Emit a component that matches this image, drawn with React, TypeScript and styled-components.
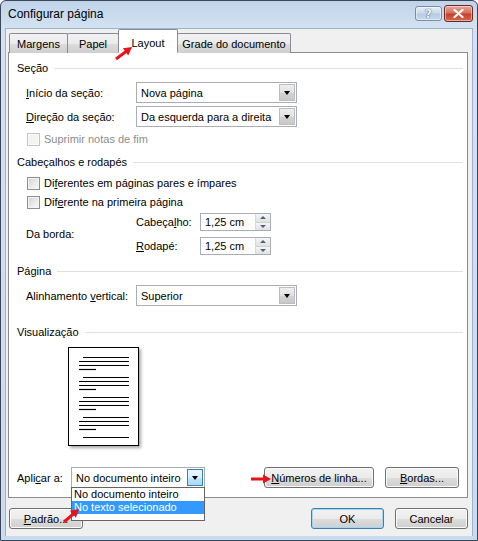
import styled, { createGlobalStyle } from "styled-components";

const GlobalStyle = createGlobalStyle`
  html, body {
    margin: 0;
    padding: 0;
    background: #ffffff;
  }
  body {
    font-family: "Liberation Sans", Arial, sans-serif;
    font-size: 11px;
    color: #000;
  }
`;

const Frame = styled.div`
  position: relative;
  width: 478px;
  height: 541px;
  box-sizing: border-box;
  border: 1px solid #3b4756;
  border-radius: 6px 6px 0 0;
  background: linear-gradient(to bottom, #bfd3ea 0, #d3e2f2 26px, #c9dbee 100%);
  padding: 0 5px 4px 5px;
  display: flex;
  flex-direction: column;
`;

const TitleBar = styled.div`
  height: 27px;
  display: flex;
  align-items: center;
  padding-left: 2px;
  margin-right: -1px;
  flex-shrink: 0;
`;

const Title = styled.div`
  flex: 1;
  font-size: 12px;
  color: #000;
  padding-bottom: 1px;
`;

const CaptionButton = styled.div<{ $close?: boolean }>`
  box-sizing: border-box;
  width: ${(p) => (p.$close ? 29 : 27)}px;
  height: ${(p) => (p.$close ? 17 : 15)}px;
  margin-top: ${(p) => (p.$close ? -3 : -2)}px;
  margin-left: ${(p) => (p.$close ? 2 : 0)}px;
  border-radius: 3px;
  border: 1px solid ${(p) => (p.$close ? "#6d2a22" : "#7a8ca5")};
  background: ${(p) =>
    p.$close
      ? "linear-gradient(to bottom, #e9a99b 0%, #d8705d 45%, #c2412a 55%, #d66a4d 100%)"
      : "linear-gradient(to bottom, #e6eef7 0%, #cbd9e9 45%, #b7cbe1 55%, #c9d9ec 100%)"};
  box-shadow: inset 0 0 0 1px rgba(255, 255, 255, 0.45);
  display: flex;
  align-items: center;
  justify-content: center;
  color: #ffffff;
  font-family: "DejaVu Sans", sans-serif;
  font-weight: bold;
  font-size: 12px;
  line-height: 1;
`;

const HelpGlyph = styled.span`
  color: #eef4fb;
  text-shadow: 0 0 1px #3d5676, 0 0 1px #3d5676;
  font-size: 12px;
`;

const Client = styled.div`
  flex: 1;
  background: #f0f0f0;
  border: 1px solid #9fb2c8;
  border-bottom: none;
  margin: 0 -1px;
  display: flex;
  flex-direction: column;
`;

const TabStrip = styled.div`
  display: flex;
  align-items: flex-end;
  height: 24px;
  padding-left: 3px;
  position: relative;
  z-index: 2;
`;

const Tab = styled.div<{ $width: number; $active?: boolean }>`
  box-sizing: border-box;
  width: ${(p) => p.$width}px;
  height: ${(p) => (p.$active ? 24 : 20)}px;
  margin-left: -1px;
  border: 1px solid #898c95;
  border-bottom: ${(p) => (p.$active ? "1px solid #ffffff" : "none")};
  border-radius: 2px 2px 0 0;
  background: ${(p) =>
    p.$active
      ? "#ffffff"
      : "linear-gradient(to bottom, #f2f2f2 0%, #ebebeb 50%, #dddddd 51%, #cfcfcf 100%)"};
  display: flex;
  align-items: center;
  justify-content: center;
  line-height: 16px;
  padding-top: ${(p) => (p.$active ? 3 : 0)}px;
  position: relative;
  white-space: nowrap;
  z-index: ${(p) => (p.$active ? 2 : 1)};
  &:first-child {
    margin-left: 0;
  }
`;

const Panel = styled.div`
  box-sizing: border-box;
  height: 446px;
  margin: -1px 4px 0 2px;
  background: #ffffff;
  border: 1px solid #898c95;
  padding: 7px 4px 0 8px;
  display: flex;
  flex-direction: column;
  position: relative;
`;

const SectionHeading = styled.div<{ $top: number }>`
  margin-top: ${(p) => p.$top}px;
  height: 16px;
  line-height: 16px;
  display: flex;
  align-items: center;
  gap: 6px;
  &::after {
    content: "";
    flex: 1;
    height: 1px;
    background: #dde1e6;
  }
`;

const FieldRow = styled.div<{ $top: number; $indent?: number }>`
  margin-top: ${(p) => p.$top}px;
  padding-left: ${(p) => p.$indent ?? 9}px;
  display: flex;
  align-items: center;
  height: 21px;
`;

const Label = styled.div<{ $width: number }>`
  width: ${(p) => p.$width}px;
  flex-shrink: 0;
  line-height: 16px;
  white-space: nowrap;
`;

const Key = styled.span`
  text-decoration: underline;
  text-underline-offset: 1px;
`;

const Select = styled.div<{ $width: number }>`
  box-sizing: border-box;
  position: relative;
  width: ${(p) => p.$width}px;
  height: 21px;
  border: 1px solid #a9adb5;
  background: #ffffff;
  display: flex;
  align-items: center;
  padding: 1px;
`;

const SelectText = styled.div`
  flex: 1;
  padding-left: 3px;
  line-height: 16px;
  white-space: nowrap;
  overflow: hidden;
`;

const DropButton = styled.div<{ $hot?: boolean }>`
  box-sizing: border-box;
  width: 16px;
  height: 17px;
  border: 1px solid ${(p) => (p.$hot ? "#3c7fb1" : "#bdbdbd")};
  background: ${(p) =>
    p.$hot
      ? "linear-gradient(to bottom, #eaf6fd 0%, #d9f0fc 50%, #bee6fd 51%, #a7d9f5 100%)"
      : "linear-gradient(to bottom, #efefef 0%, #e0e0e0 50%, #d3d3d3 51%, #c8c8c8 100%)"};
  display: flex;
  align-items: center;
  justify-content: center;
  &::before {
    content: "";
    border-left: 3px solid transparent;
    border-right: 3px solid transparent;
    border-top: 4px solid #000000;
    margin-top: 1px;
  }
`;

const DropList = styled.div`
  position: absolute;
  top: 100%;
  left: -1px;
  right: -1px;
  box-sizing: border-box;
  height: 34px;
  background: #ffffff;
  border: 1px solid #646464;
  z-index: 10;
`;

const ListItem = styled.div<{ $selected?: boolean }>`
  height: 13px;
  line-height: 13px;
  padding-left: 2px;
  white-space: nowrap;
  background: ${(p) => (p.$selected ? "#3399ff" : "transparent")};
  color: ${(p) => (p.$selected ? "#ffffff" : "#000000")};
`;

const CheckRow = styled.div<{ $top: number; $disabled?: boolean }>`
  margin-top: ${(p) => p.$top}px;
  padding-left: 10px;
  height: 15px;
  display: flex;
  align-items: center;
  gap: 4px;
  line-height: 15px;
  color: ${(p) => (p.$disabled ? "#8d8d8d" : "#000000")};
`;

const CheckBox = styled.div<{ $disabled?: boolean }>`
  box-sizing: border-box;
  width: 13px;
  height: 13px;
  border: 1px solid ${(p) => (p.$disabled ? "#c4c4c4" : "#8e8f8f")};
  background: ${(p) =>
    p.$disabled
      ? "#f4f4f4"
      : "linear-gradient(135deg, #d2d2d2 0%, #ececec 60%, #f8f8f8 100%)"};
  box-shadow: inset 0 0 0 1px ${(p) => (p.$disabled ? "#fafafa" : "#f4f4f4")};
  flex-shrink: 0;
`;

const BorderBlock = styled.div`
  margin-top: 3px;
  padding-left: 9px;
  display: flex;
  align-items: center;
`;

const SpinColumn = styled.div`
  display: flex;
  flex-direction: column;
  gap: 6px;
`;

const SpinRow = styled.div`
  display: flex;
  align-items: center;
  height: 18px;
`;

const SpinBox = styled.div`
  box-sizing: border-box;
  width: 71px;
  height: 18px;
  border: 1px solid #a9adb5;
  background: #ffffff;
  display: flex;
  align-items: stretch;
`;

const SpinText = styled.div`
  flex: 1;
  padding-left: 4px;
  line-height: 16px;
`;

const SpinButtons = styled.div`
  width: 14px;
  display: flex;
  flex-direction: column;
  border-left: 1px solid #dadada;
`;

const SpinButton = styled.div<{ $down?: boolean }>`
  flex: 1;
  background: linear-gradient(to bottom, #f6f6f6, #e2e2e2);
  border-top: ${(p) => (p.$down ? "1px solid #d0d0d0" : "none")};
  display: flex;
  align-items: center;
  justify-content: center;
  &::before {
    content: "";
    border-left: 3px solid transparent;
    border-right: 3px solid transparent;
    ${(p) =>
      p.$down ? "border-top: 3px solid #4d6185;" : "border-bottom: 3px solid #4d6185;"}
  }
`;

const PreviewPage = styled.div`
  margin-top: 7px;
  margin-left: 51px;
  box-sizing: border-box;
  width: 71px;
  height: 99px;
  border: 1px solid #000000;
  background: #ffffff;
  box-shadow: 2px 2px 3px rgba(0, 0, 0, 0.35);
  flex-shrink: 0;
`;

const ApplyRow = styled.div`
  margin-top: 21px;
  display: flex;
  align-items: center;
  height: 21px;
  padding-right: 4px;
`;

const Spacer = styled.div`
  flex: 1;
`;

const PushButton = styled.div<{ $width: number; $default?: boolean; $gap?: number }>`
  box-sizing: border-box;
  width: ${(p) => p.$width}px;
  height: 21px;
  margin-left: ${(p) => p.$gap ?? 0}px;
  border: 1px solid ${(p) => (p.$default ? "#3c7fb1" : "#707070")};
  border-radius: 3px;
  background: linear-gradient(to bottom, #f2f2f2 0%, #ebebeb 50%, #dddddd 51%, #cfcfcf 100%);
  box-shadow: inset 0 0 0 1px ${(p) => (p.$default ? "#9fd8f3" : "#fbfbfb")};
  display: flex;
  align-items: center;
  justify-content: center;
  line-height: 16px;
  white-space: nowrap;
  flex-shrink: 0;
`;

const Footer = styled.div`
  margin-top: 10px;
  display: flex;
  align-items: center;
  padding: 0 4px 0 3px;
`;

const Overlay = styled.svg`
  position: absolute;
  left: 0;
  top: 0;
  width: 478px;
  height: 541px;
  pointer-events: none;
  z-index: 20;
`;

const previewLines = (() => {
  const lines: { x1: number; x2: number; y: number }[] = [];
  [9, 29, 49, 69].forEach((top) => {
    lines.push({ x1: 14, x2: 60, y: top });
    lines.push({ x1: 10, x2: 60, y: top + 4 });
    lines.push({ x1: 10, x2: 60, y: top + 8 });
    lines.push({ x1: 10, x2: 27, y: top + 12 });
  });
  lines.push({ x1: 14, x2: 60, y: 89 });
  return lines;
})();

const Arrow = ({ x1, y1, x2, y2 }: { x1: number; y1: number; x2: number; y2: number }) => {
  const dx = x2 - x1;
  const dy = y2 - y1;
  const len = Math.hypot(dx, dy);
  const ux = dx / len;
  const uy = dy / len;
  const head = 8;
  const half = 4.5;
  const bx = x2 - ux * head;
  const by = y2 - uy * head;
  const px = -uy;
  const py = ux;
  const pts = `${x2},${y2} ${bx + px * half},${by + py * half} ${bx - px * half},${by - py * half}`;
  return (
    <g>
      <line x1={x1} y1={y1} x2={bx + ux} y2={by + uy} stroke="#e8121a" strokeWidth={3} />
      <polygon points={pts} fill="#e8121a" />
    </g>
  );
};

export default function App() {
  return (
    <>
      <GlobalStyle />
      <Frame>
        <TitleBar>
          <Title>Configurar página</Title>
          <CaptionButton>
            <HelpGlyph>?</HelpGlyph>
          </CaptionButton>
          <CaptionButton $close>
            <svg width="11" height="9" viewBox="0 0 11 9">
              <path d="M1.5 1 L9.5 8 M9.5 1 L1.5 8" stroke="#ffffff" strokeWidth="2.2" strokeLinecap="round" />
            </svg>
          </CaptionButton>
        </TitleBar>

        <Client>
          <TabStrip>
            <Tab $width={59}>Margens</Tab>
            <Tab $width={52}>Papel</Tab>
            <Tab $width={60} $active>
              Layout
            </Tab>
            <Tab $width={114}>Grade do documento</Tab>
          </TabStrip>

          <Panel>
            <SectionHeading $top={0}>Seção</SectionHeading>
            <FieldRow $top={6}>
              <Label $width={110}>
                <Key>I</Key>nício da seção:
              </Label>
              <Select $width={161}>
                <SelectText>Nova página</SelectText>
                <DropButton />
              </Select>
            </FieldRow>
            <FieldRow $top={3}>
              <Label $width={110}>
                <Key>D</Key>ireção da seção:
              </Label>
              <Select $width={161}>
                <SelectText>Da esquerda para a direita</SelectText>
                <DropButton />
              </Select>
            </FieldRow>
            <CheckRow $top={5} $disabled>
              <CheckBox $disabled />
              Suprimir notas de fim
            </CheckRow>

            <SectionHeading $top={7}>Cabeçalhos e rodapés</SectionHeading>
            <CheckRow $top={6}>
              <CheckBox />
              <span>
                Di<Key>f</Key>erentes em páginas pares e ímpares
              </span>
            </CheckRow>
            <CheckRow $top={4}>
              <CheckBox />
              <span>
                Dif<Key>e</Key>rente na primeira página
              </span>
            </CheckRow>
            <BorderBlock>
              <Label $width={110}>Da borda:</Label>
              <SpinColumn>
                <SpinRow>
                  <Label $width={64}>
                    Cabeça<Key>l</Key>ho:
                  </Label>
                  <SpinBox>
                    <SpinText>1,25 cm</SpinText>
                    <SpinButtons>
                      <SpinButton />
                      <SpinButton $down />
                    </SpinButtons>
                  </SpinBox>
                </SpinRow>
                <SpinRow>
                  <Label $width={64}>
                    <Key>R</Key>odapé:
                  </Label>
                  <SpinBox>
                    <SpinText>1,25 cm</SpinText>
                    <SpinButtons>
                      <SpinButton />
                      <SpinButton $down />
                    </SpinButtons>
                  </SpinBox>
                </SpinRow>
              </SpinColumn>
            </BorderBlock>

            <SectionHeading $top={8}>Página</SectionHeading>
            <FieldRow $top={6}>
              <Label $width={110}>
                Alinhamento <Key>v</Key>ertical:
              </Label>
              <Select $width={161}>
                <SelectText>Superior</SelectText>
                <DropButton />
              </Select>
            </FieldRow>

            <SectionHeading $top={18}>Visualização</SectionHeading>
            <PreviewPage>
              <svg width="69" height="97" viewBox="0 0 69 97">
                {previewLines.map((l, i) => (
                  <line key={i} x1={l.x1} x2={l.x2} y1={l.y + 0.5} y2={l.y + 0.5} stroke="#000" strokeWidth={1.2} />
                ))}
              </svg>
            </PreviewPage>

            <ApplyRow>
              <Label $width={54}>
                Apli<Key>c</Key>ar a:
              </Label>
              <Select $width={134}>
                <SelectText>No documento inteiro</SelectText>
                <DropButton $hot />
                <DropList>
                  <ListItem>No documento inteiro</ListItem>
                  <ListItem $selected>No texto selecionado</ListItem>
                </DropList>
              </Select>
              <Spacer />
              <PushButton $width={110}>
                <span>
                  <Key>N</Key>úmeros de linha...
                </span>
              </PushButton>
              <PushButton $width={74} $gap={11}>
                <span>
                  <Key>B</Key>ordas...
                </span>
              </PushButton>
            </ApplyRow>
          </Panel>

          <Footer>
            <PushButton $width={74}>
              <span>
                <Key>P</Key>adrão...
              </span>
            </PushButton>
            <Spacer />
            <PushButton $width={73} $default>
              OK
            </PushButton>
            <PushButton $width={73} $gap={11}>
              Cancelar
            </PushButton>
          </Footer>
        </Client>

        <Overlay viewBox="0 0 478 541">
          <Arrow x1={115} y1={58} x2={131} y2={46} />
          <Arrow x1={250} y1={478} x2={270} y2={478} />
          <Arrow x1={63} y1={521} x2={78} y2={508} />
        </Overlay>
      </Frame>
    </>
  );
}
